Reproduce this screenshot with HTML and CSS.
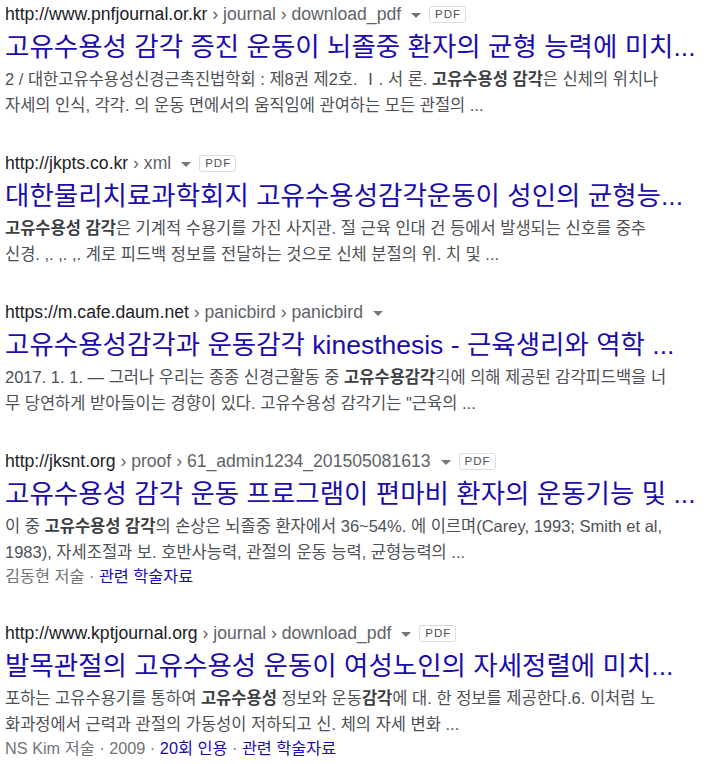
FILE: index.html
```html
<!DOCTYPE html>
<html lang="ko">
<head>
<meta charset="utf-8">
<link rel="stylesheet" href="styles.css">
</head>
<body>
<div class="results">
  <div class="result">
    <div class="url"><span class="host">http://www.pnfjournal.or.kr</span><span class="path"> › journal › download_pdf</span><span class="caret"></span><span class="badge">PDF</span></div>
    <div class="title">고유수용성 감각 증진 운동이 뇌졸중 환자의 균형 능력에 미치...</div>
    <div class="snippet">2 / 대한고유수용성신경근촉진법학회 : 제8권 제2호. Ⅰ. 서 론. <b>고유수용성 감각</b>은 신체의 위치나<br>자세의 인식, 각각. 의 운동 면에서의 움직임에 관여하는 모든 관절의 ...</div>
  </div>
  <div class="result">
    <div class="url"><span class="host">http://jkpts.co.kr</span><span class="path"> › xml</span><span class="caret"></span><span class="badge">PDF</span></div>
    <div class="title">대한물리치료과학회지 고유수용성감각운동이 성인의 균형능...</div>
    <div class="snippet"><b>고유수용성 감각</b>은 기계적 수용기를 가진 사지관. 절 근육 인대 건 등에서 발생되는 신호를 중추<br>신경. ,. ,. ,. 계로 피드백 정보를 전달하는 것으로 신체 분절의 위. 치 및 ...</div>
  </div>
  <div class="result">
    <div class="url"><span class="host">https://m.cafe.daum.net</span><span class="path"> › panicbird › panicbird</span><span class="caret"></span></div>
    <div class="title">고유수용성감각과 운동감각 kinesthesis - 근육생리와 역학 ...</div>
    <div class="snippet"><span class="date">2017. 1. 1. — </span>그러나 우리는 종종 신경근활동 중 <b>고유수용감각</b>긱에 의해 제공된 감각피드백을 너<br>무 당연하게 받아들이는 경향이 있다. 고유수용성 감각기는 "근육의 ...</div>
  </div>
  <div class="result">
    <div class="url"><span class="host">http://jksnt.org</span><span class="path"> › proof › 61_admin1234_201505081613</span><span class="caret"></span><span class="badge">PDF</span></div>
    <div class="title">고유수용성 감각 운동 프로그램이 편마비 환자의 운동기능 및 ...</div>
    <div class="snippet">이 중 <b>고유수용성 감각</b>의 손상은 뇌졸중 환자에서 36~54%. 에 이르며(Carey, 1993; Smith et al,<br>1983), 자세조절과 보. 호반사능력, 관절의 운동 능력, 균형능력의 ...</div>
    <div class="meta">김동현 저술 · <a class="link">관련 학술자료</a></div>
  </div>
  <div class="result">
    <div class="url"><span class="host">http://www.kptjournal.org</span><span class="path"> › journal › download_pdf</span><span class="caret"></span><span class="badge">PDF</span></div>
    <div class="title">발목관절의 고유수용성 운동이 여성노인의 자세정렬에 미치...</div>
    <div class="snippet">포하는 고유수용기를 통하여 <b>고유수용성</b> 정보와 운동<b>감각</b>에 대. 한 정보를 제공한다.6. 이처럼 노<br>화과정에서 근력과 관절의 가동성이 저하되고 신. 체의 자세 변화 ...</div>
    <div class="meta">NS Kim 저술 · 2009 · <a class="link">20회 인용</a> · <a class="link">관련 학술자료</a></div>
  </div>
</div>
</body>
</html>
```
FILE: styles.css
```css
html, body {
  margin: 0;
  padding: 0;
  background: #ffffff;
}
body {
  font-family: "Liberation Sans", "Noto Sans CJK KR", sans-serif;
  color: #202124;
}
.results {
  padding: 0 0 0 5px;
  overflow: hidden;
}
.result {
  padding-bottom: 31px;
}
.url {
  display: flex;
  align-items: center;
  height: 28px;
  font-size: 17.6px;
  white-space: nowrap;
}
.host {
  color: #202124;
}
.path {
  color: #5f6368;
  white-space: pre;
}
.caret {
  width: 0;
  height: 0;
  border-left: 5px solid transparent;
  border-right: 5px solid transparent;
  border-top: 5px solid #70757a;
  margin-left: 10px;
  margin-top: 3px;
}
.badge {
  margin-left: 8px;
  border: 1px solid #dadce0;
  border-radius: 3px;
  font-size: 11.5px;
  letter-spacing: 1px;
  color: #4d5156;
  line-height: 15px;
  padding: 0 4px 0 5px;
}
.title {
  font-size: 26.5px;
  line-height: 38px;
  color: #1a0dab;
  white-space: nowrap;
}
.snippet {
  font-size: 16.5px;
  line-height: 26px;
  color: #4d5156;
  white-space: nowrap;
}
.snippet b {
  color: #3c4043;
  font-weight: bold;
}
.meta {
  font-size: 16.3px;
  line-height: 23px;
  color: #70757a;
  white-space: nowrap;
}
.link {
  color: #1a0dab;
  text-decoration: none;
}
```
